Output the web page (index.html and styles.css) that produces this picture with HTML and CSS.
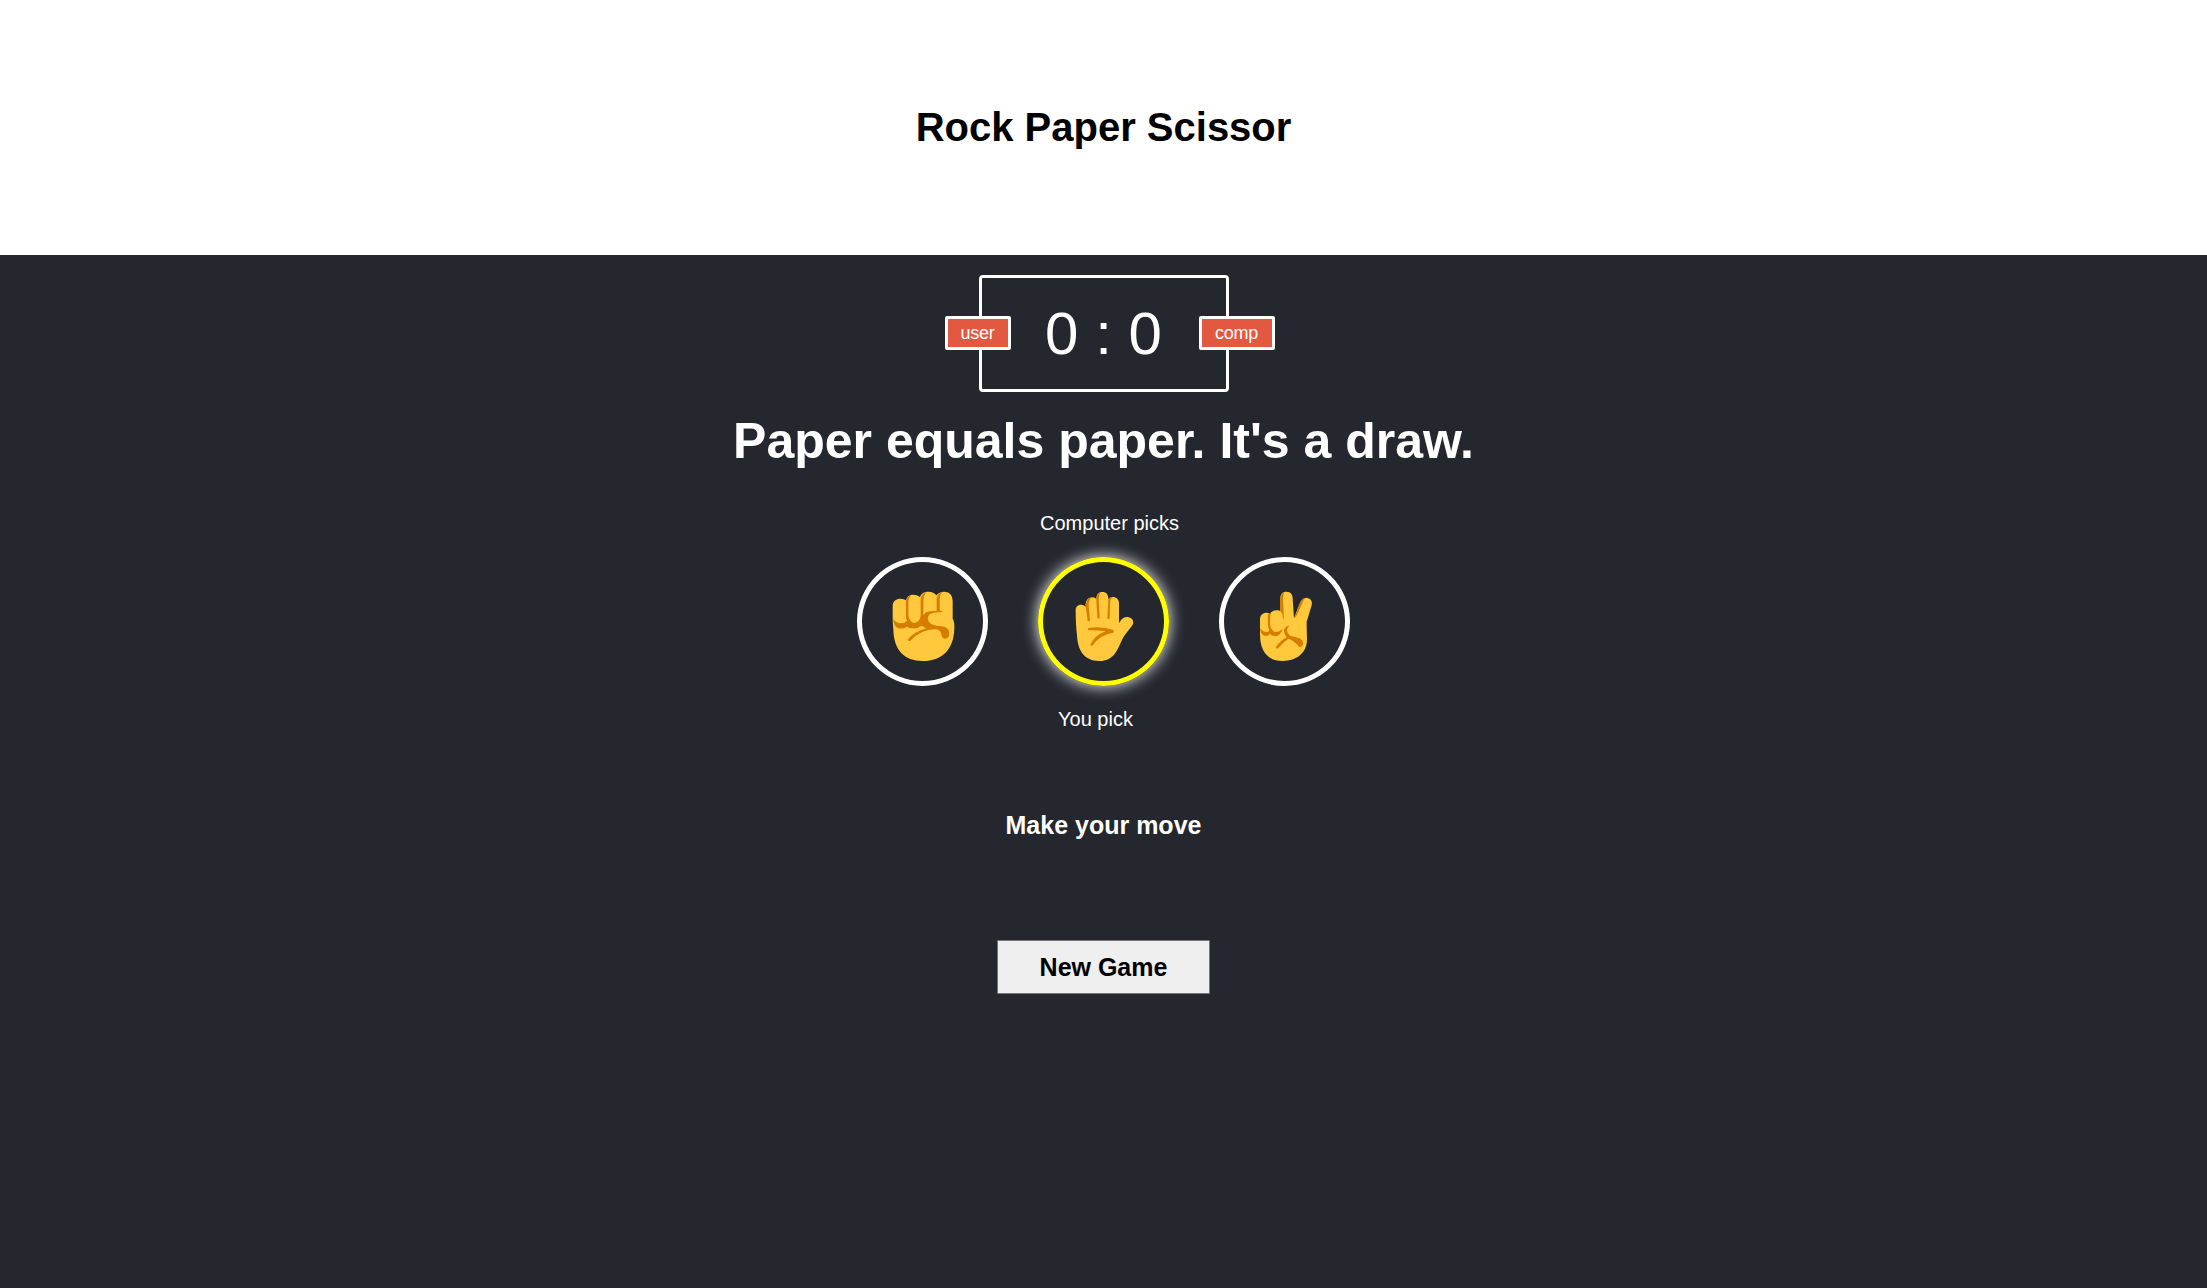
FILE: index.html
```html
<!DOCTYPE html>
<html lang="en">
<head>
<meta charset="utf-8">
<title>Rock Paper Scissor</title>
<link rel="stylesheet" href="styles.css">
</head>
<body>
<header class="header"><h1 class="title">Rock Paper Scissor</h1></header>
<main class="game">
  <div class="score-board">
    <div class="badge badge-user">user</div>
    <div class="badge badge-comp">comp</div>
    <span>0</span> : <span>0</span>
  </div>
  <p class="result">Paper equals paper. It's a draw.</p>
  <p class="label label-comp">Computer picks</p>
  <div class="choices">
    <div class="choice">
      <svg class="hand" viewBox="36 36 363 357" aria-label="Rock">
        <path fill="#ffc83d" d="M128 168C128 153 139 146 152 146Q162 146 168 151C171 138 179 134 190 134Q202 134 210 141C213 130 223 125 236 125Q251 125 259 136Q267 125 284 125Q308 127 308 153V206Q314 214 313 236C311 298 277 333 218 333C163 333 131 301 130 237Q128 224 128 205Z"/>
        <path fill="#d67d00" d="M168 151Q173 137 184 135Q175 143 175 160V198Q179 214 191 219Q208 219 212 198V145Q216 131 229 127Q220 136 220 154V196L228 187Q240 182 260 182V145Q263 130 277 127Q269 134 269 151V182L280 184Q276 187 262 187Q235 187 233 205Q235 225 263 228Q297 227 298 249L297 257Q293 267 283 266Q276 264 273 250Q269 239 258 238Q216 236 181 272Q175 275 173 269Q193 245 229 235L214 227Q202 237 189 235Q177 235 171 230Q158 239 144 234Q130 228 130 206Q136 218 153 220Q165 220 171 212Q167 206 168 190Z"/>
      </svg>
    </div>
    <div class="choice choice-active">
      <svg class="hand" viewBox="39 51 363 357" aria-label="Paper">
        <path fill="#ffc83d" d="M137 195C137 179 158 174 167 186C165 166 175 157 188 157Q195 157 199 162C199 148 206 141 217 141C229 141 235 149 235 162C246 150 267 156 267 174V234L275 223Q283 215 293 216C310 218 314 233 305 244L285 269C265 296 263 348 207 348C164 348 143 318 141 271Q137 240 137 195Z"/>
        <path fill="#d67d00" d="M167 184Q169 160 184 157Q175 169 176 184L180 226Q178 231 173 228ZM199 162Q199 146 212 141Q205 151 206 163L209 218Q206 223 202 218ZM235 163Q238 156 246 157Q240 164 240 175L239 220Q236 225 232 220ZM175 249Q216 243 250 255Q254 260 250 263Q211 268 188 301Q183 305 181 299Q194 271 227 259Q202 255 176 256Q172 253 175 249Z"/>
      </svg>
    </div>
    <div class="choice">
      <svg class="hand" viewBox="42 36 363 357" aria-label="Scissors">
        <path fill="#ffc83d" d="M150 209C150 194 159 188 170 188Q176 188 180 192C184 183 193 180 203 181Q208 181 211 184V145C211 132 217 125 229 125C243 125 248 134 248 147L252 204L269 161C273 149 280 143 290 143C303 145 309 155 304 169L290 215Q290 233 291 268C291 308 261 333 218 333C173 333 150 304 150 253Z"/>
        <path fill="#d67d00" d="M211 184V146Q212 130 223 127Q219 134 219 145L222 209Q217 201 217 191ZM253 204L269 161Q274 146 286 144Q279 151 276 162L258 201ZM174 192L182 191Q180 198 180 223Q183 242 195 246Q211 247 218 235Q214 256 196 259Q186 258 180 252Q170 262 160 256Q149 247 151 235Q157 247 174 246L178 241Q172 231 174 192ZM238 227Q223 241 240 257Q258 260 268 265Q281 272 279 282Q276 294 267 290Q250 270 235 266Q221 276 204 295Q199 298 197 292Q213 270 230 262Q221 250 222 240Q226 227 238 227Z"/>
      </svg>
    </div>
  </div>
  <p class="label label-user">You pick</p>
  <p class="move">Make your move</p>
  <button class="new-game">New Game</button>
</main>
</body>
</html>
```
FILE: styles.css
```css
* { box-sizing: border-box; margin: 0; padding: 0; }
body {
  min-height: 100vh;
  display: flex;
  flex-direction: column;
  background: #24272e;
  color: #fff;
  font-family: Arial, "Liberation Sans", sans-serif;
}
.header {
  height: 255px;
  display: flex;
  align-items: center;
  justify-content: center;
  padding-bottom: 2px;
  background: #fff;
  color: #000;
}
.title { font-size: 40px; line-height: 46px; }
.game {
  flex: 1;
  display: flex;
  flex-direction: column;
  align-items: center;
  padding-top: 20px;
}
.score-board {
  position: relative;
  width: 250px;
  height: 117px;
  border: 3px solid #fff;
  border-radius: 4px;
  font-size: 60px;
  line-height: 111px;
  text-align: center;
}
.badge {
  position: absolute;
  top: 38px;
  height: 34px;
  border: 3px solid #fff;
  border-radius: 2px;
  background: #e25840;
  font-size: 18px;
  letter-spacing: -0.2px;
  line-height: 28px;
}
.badge-user { left: -37px; width: 66px; }
.badge-comp { right: -49px; width: 76px; }
.result { margin-top: 20px; font-size: 50px; font-weight: bold; line-height: 58px; }
.label { font-size: 20px; line-height: 24px; }
.label-comp { margin-top: 41px; padding-left: 12px; }
.choices { display: flex; gap: 50px; margin-top: 22px; }
.choice {
  width: 131px;
  height: 129px;
  border: 5px solid #fff;
  border-radius: 50%;
}
.choice-active { border-color: #ff0; box-shadow: 0 0 16px #fff; }
.hand { display: block; width: 121px; height: 119px; }
.label-user { margin-top: 21px; padding-right: 16px; }
.move { margin-top: 79px; font-size: 25px; font-weight: bold; line-height: 30px; }
.new-game {
  width: 213px;
  height: 54px;
  margin-top: 100px;
  border: 1px solid #767676;
  border-radius: 1px;
  background: #efefef;
  color: #000;
  font: bold 25px/50px Arial, "Liberation Sans", sans-serif;
}
```
